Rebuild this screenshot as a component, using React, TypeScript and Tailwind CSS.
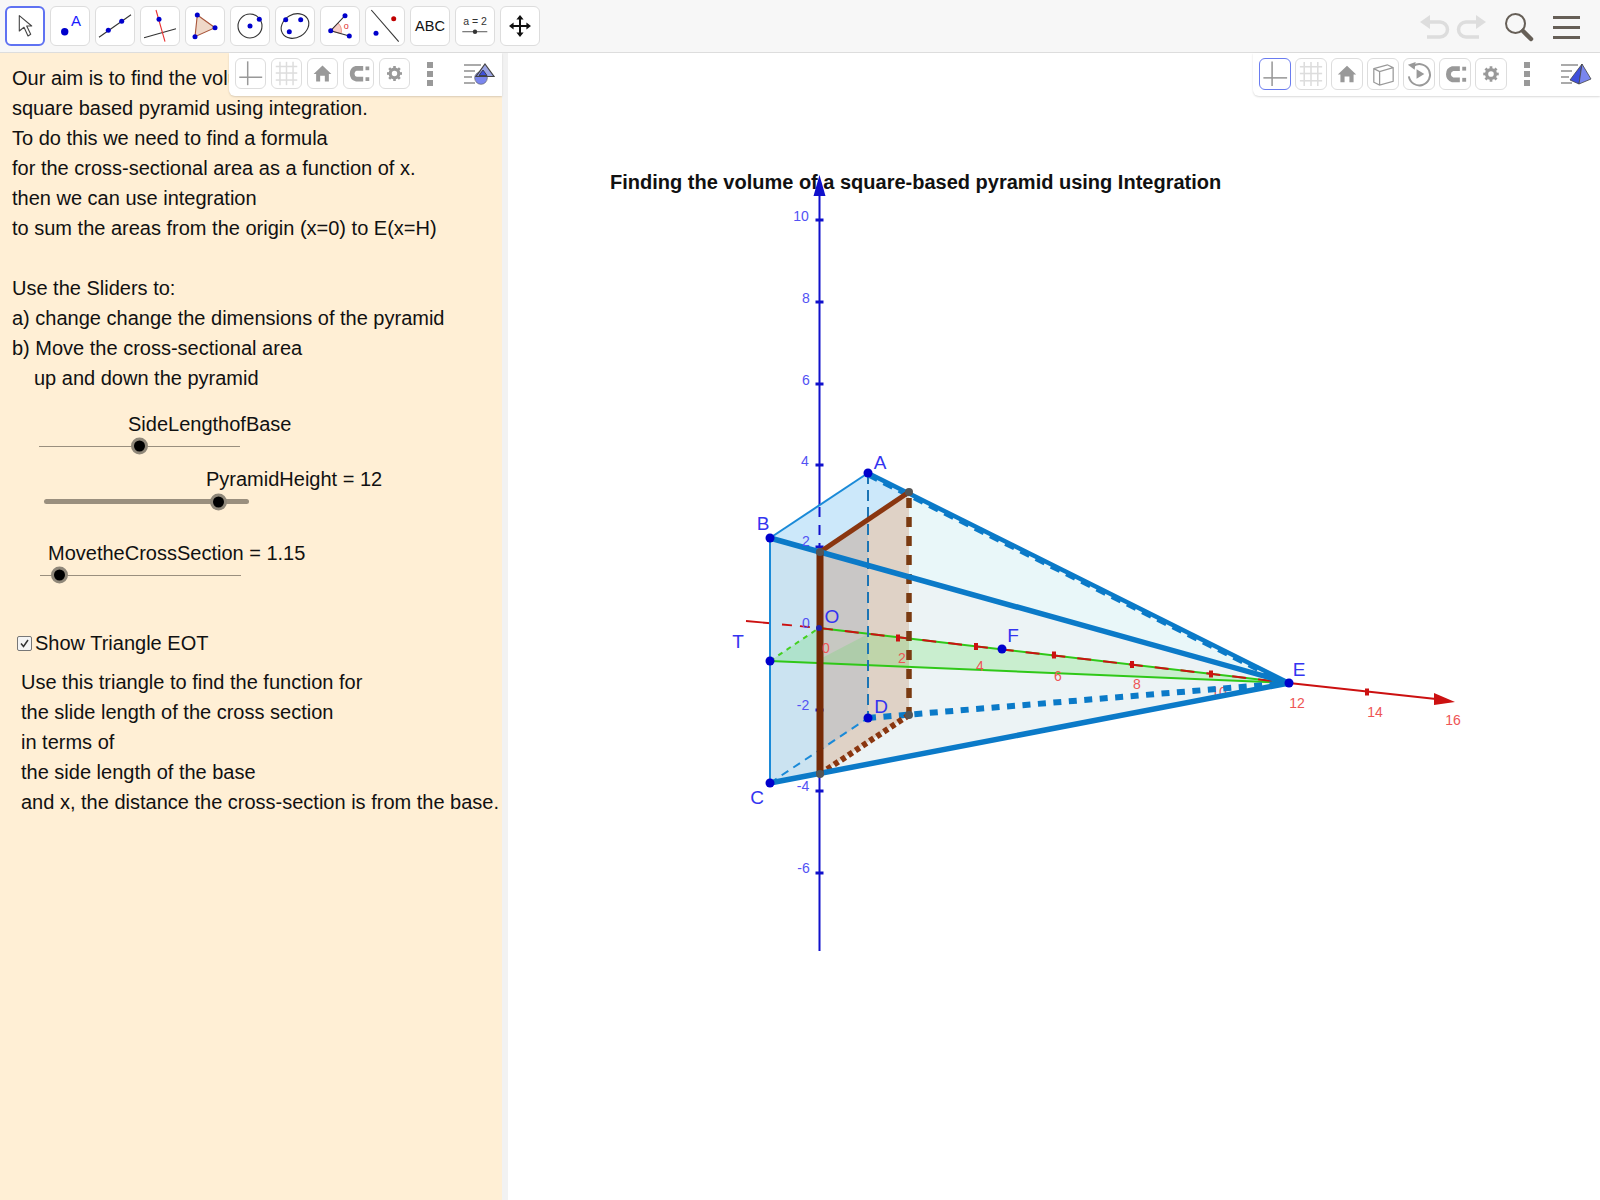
import React from "react";

const B = "#0000cc";
const Dot = ({ x, y, r = 2.5, c = B }: { x: number; y: number; r?: number; c?: string }) => <circle cx={x} cy={y} r={r} fill={c} />;

const tools: React.ReactNode[] = [
  <path d="M14.3 9.7 L14.3 25 L19 21.3 L23 30 L25.7 28.3 L21.7 20 L26.7 20 Z" fill="#fff" stroke="#444" strokeWidth="1.1" strokeLinejoin="round" />,
  <>
    <Dot x={14.7} y={25.7} r={3.7} />
    <text x={26} y={20} fontSize="15" fill="#1a1aff" textAnchor="middle" fontFamily="Liberation Sans">A</text>
  </>,
  <>
    <line x1={4} y1={31.3} x2={36} y2={8.7} stroke="#333" strokeWidth="1.1" />
    <Dot x={13.3} y={24.3} /><Dot x={26.7} y={15.3} />
  </>,
  <>
    <line x1={4} y1={31.7} x2={36} y2={22.7} stroke="#333" strokeWidth="1.1" />
    <line x1={16} y1={4} x2={25} y2={35.7} stroke="#e83030" strokeWidth="1.1" />
    <Dot x={19} y={13.3} />
  </>,
  <>
    <polygon points="12.3,9 30,21.7 10,30.7" fill="#efd8c8" stroke="#a8553a" strokeWidth="1.1" />
    <Dot x={12.3} y={9} /><Dot x={30} y={21.7} /><Dot x={10} y={30.7} />
  </>,
  <>
    <circle cx={20} cy={20} r={12} fill="none" stroke="#333" strokeWidth="1.1" />
    <Dot x={20} y={20} /><Dot x={29.3} y={13.3} />
  </>,
  <>
    <ellipse cx={20} cy={20} rx={14.5} ry={11.5} transform="rotate(-30 20 20)" fill="none" stroke="#333" strokeWidth="1.1" />
    <Dot x={10.7} y={13.7} /><Dot x={25.7} y={13.7} /><Dot x={14.3} y={25.7} />
  </>,
  <>
    <path d="M10.7 24.7 L18 17 A11 11 0 0 1 21 27.7 Z" fill="#f8cfc8" stroke="#e87060" strokeWidth="0.7" />
    <path d="M25 9.7 L10.7 24.7 L29.3 30" fill="none" stroke="#333" strokeWidth="1.1" />
    <Dot x={25} y={9.7} /><Dot x={10.7} y={24.7} /><Dot x={29.3} y={30} />
    <text x={26.3} y={23} fontSize="9" fill="#e03030" textAnchor="middle" fontFamily="Liberation Sans">o</text>
  </>,
  <>
    <line x1={6.3} y1={4} x2={33.7} y2={35.7} stroke="#333" strokeWidth="1.1" />
    <Dot x={28.7} y={12.7} c="#c00000" /><Dot x={11} y={27.3} />
  </>,
  <text x={20} y={25} fontSize="14.5" fill="#111" textAnchor="middle" fontFamily="Liberation Sans">ABC</text>,
  <>
    <text x={20} y={19} fontSize="10.5" fill="#333" textAnchor="middle" fontFamily="Liberation Sans">a = 2</text>
    <line x1={7.3} y1={25.7} x2={32.3} y2={25.7} stroke="#666" strokeWidth="1.1" />
    <circle cx={20} cy={25.7} r={2.2} fill="#333" />
  </>,
  <path d="M20 9 L23.6 13.6 L21 13.6 L21 19 L26.4 19 L26.4 16.4 L31 20 L26.4 23.6 L26.4 21 L21 21 L21 26.4 L23.6 26.4 L20 31 L16.4 26.4 L19 26.4 L19 21 L13.6 21 L13.6 23.6 L9 20 L13.6 16.4 L13.6 19 L19 19 L19 13.6 L16.4 13.6 Z" fill="#111" />,
];

const G = "#999999";
const StyleIcon = ({ kind }: { kind: string }) => {
  if (kind === "axes")
    return <><line x1={3.5} y1={19.5} x2={28} y2={19.5} stroke={G} strokeWidth="1.6" /><line x1={12.5} y1={2.5} x2={12.5} y2={28} stroke={G} strokeWidth="1.6" /></>;
  if (kind === "grid")
    return (
      <g stroke="#dddddd" strokeWidth="1.6">
        <line x1={4} y1={8} x2={27} y2={8} /><line x1={4} y1={15} x2={27} y2={15} /><line x1={4} y1={22.5} x2={27} y2={22.5} />
        <line x1={8.5} y1={3} x2={8.5} y2={28} /><line x1={15.5} y1={3} x2={15.5} y2={28} /><line x1={22.5} y1={3} x2={22.5} y2={28} />
      </g>
    );
  if (kind === "home") return <path d="M15.5 7 L25 16 L22.3 16 L22.3 24 L18 24 L18 18 L13 18 L13 24 L8.7 24 L8.7 16 L6 16 Z" fill={G} />;
  if (kind === "magnet")
    return (
      <g>
        <path d="M20.5 10 L13 10 A6 6 0 0 0 13 21.5 L20.5 21.5" fill="none" stroke={G} strokeWidth="5" />
        <rect x={23} y={8} width={4} height={4} fill={G} />
        <rect x={23} y={19.5} width={4} height={4} fill={G} />
      </g>
    );
  if (kind === "gear")
    return (
      <g>
        <circle cx={15.5} cy={15.5} r={4.6} fill="none" stroke={G} strokeWidth="3.4" />
        <g stroke={G} strokeWidth="2.8">
          <line x1={15.5} y1={7.5} x2={15.5} y2={10} /><line x1={15.5} y1={21} x2={15.5} y2={23.5} />
          <line x1={7.5} y1={15.5} x2={10} y2={15.5} /><line x1={21} y1={15.5} x2={23.5} y2={15.5} />
          <line x1={9.8} y1={9.8} x2={11.6} y2={11.6} /><line x1={19.4} y1={19.4} x2={21.2} y2={21.2} />
          <line x1={21.2} y1={9.8} x2={19.4} y2={11.6} /><line x1={11.6} y1={19.4} x2={9.8} y2={21.2} />
        </g>
      </g>
    );
  if (kind === "cube")
    return <path d="M6 10 L20 6 L26 9 L26 23 L12 27 L6 24 Z M6 10 L12 13 L26 9 M12 13 L12 27" fill="none" stroke={G} strokeWidth="1.3" />;
  return (
    <g>
      <path d="M10 7 A11 11 0 1 1 5 18" fill="none" stroke={G} strokeWidth="2" />
      <path d="M4 6 L12 3 L11 11 Z" fill={G} />
      <path d="M13 10.5 L21 15.5 L13 20.5 Z" fill={G} />
    </g>
  );
};

const SBtn = ({ kind, active, cls }: { kind: string; active?: boolean; cls: string }) => (
  <div className={`${cls} bg-white rounded-[6px] border ${active ? "border-[#6a7cf0]" : "border-[#dddddd]"}`}>
    <svg viewBox="0 0 31 31" className="w-full h-full block"><StyleIcon kind={kind} /></svg>
  </div>
);

const Dots = () => (
  <div className="flex flex-col items-center gap-[3px]">
    <div className="w-[6px] h-[6px] bg-[#999999]" />
    <div className="w-[6px] h-[6px] bg-[#999999]" />
    <div className="w-[6px] h-[6px] bg-[#999999]" />
  </div>
);

const Toggle = ({ pyramid }: { pyramid?: boolean }) => (
  <svg width="31" height="22" viewBox="0 0 31 22" className="block">
    <g stroke="#aaaaaa" strokeWidth="2">
      <line x1={0} y1={2} x2={17} y2={2} /><line x1={0} y1={8} x2={11} y2={8} />
      <line x1={0} y1={14} x2={8} y2={14} /><line x1={0} y1={20} x2={11} y2={20} />
    </g>
    {pyramid ? (
      <>
        <polygon points="21,1 9,17 18,21" fill="#3f50dc" stroke="#444" strokeWidth="0.8" />
        <polygon points="21,1 30,16 18,21" fill="#7a86ee" stroke="#444" strokeWidth="0.8" />
      </>
    ) : (
      <>
        <circle cx={17} cy={15} r={6.3} fill="#7a86ee" stroke="#666" strokeWidth="0.7" />
        <polygon points="21,1 30,13.5 12,13.5" fill="#8a94e0" fillOpacity="0.85" stroke="#444" strokeWidth="1.2" />
        <polygon points="19,7 23,12.5 15,12.5" fill="#3f50dc" stroke="#333" strokeWidth="0.8" />
      </>
    )}
  </svg>
);

const Knob = ({ cls }: { cls: string }) => (
  <div className={`${cls} absolute top-1/2 -translate-y-1/2 w-[17px] h-[17px] rounded-full bg-black border-[3px] border-[#8f8779]`} />
);

const topLines = [
  "square based pyramid using integration.",
  "To do this we need to find a formula",
  "for the cross-sectional area as a function of x.",
  "then we can use integration",
  "to sum the areas from the origin (x=0) to E(x=H)",
];
const midLines = [
  "Use the Sliders to:",
  "a) change change the dimensions of the pyramid",
  "b) Move the cross-sectional area",
];
const botLines = [
  "Use this triangle to find the function for",
  "the slide length of the cross section",
  "in terms of",
  "the side length of the base",
  "and x, the distance the cross-section is from the base.",
];

const Lab = ({ x, y, t, c, s = 14 }: { x: number; y: number; t: string; c: string; s?: number }) => (
  <text x={x} y={y} fontSize={s} fill={c} textAnchor="middle" dominantBaseline="central" fontFamily="Liberation Sans">{t}</text>
);

const zTicks = [220, 302, 384, 465, 547, 710, 791, 873];
const xTicks: [number, number][] = [[898, 638], [976, 646.5], [1054, 655], [1132, 664.5], [1211, 674], [1367, 692]];
const blue = "#0b7ac8";

const Scene = () => (
  <svg viewBox="508 53 1092 1147" className="w-full h-full block">
    <text x={610} y={181.5} fontSize="20" fontWeight="700" fill="#111111" dominantBaseline="central" fontFamily="Liberation Sans">Finding the volume of a square-based pyramid using Integration</text>

    {/* z axis behind */}
    <line x1={819.5} y1={190} x2={819.5} y2={951} stroke="#1010cc" strokeWidth="2" />
    <polygon points="819.5,175 813.5,196 825.5,196" fill="#1010cc" />

    {/* x axis */}
    <line x1={746} y1={621} x2={773} y2={623.5} stroke="#cc1111" strokeWidth="1.8" />
    <line x1={1289} y1={683} x2={1436} y2={699} stroke="#cc1111" strokeWidth="2" />
    <polygon points="1455,702 1434,693 1434,705" fill="#cc1111" />

    {/* faces */}
    <polygon points="868,473 1289,683 770,538" fill="#e9f7f9" />
    <polygon points="770,538 1289,683 770,783" fill="#ecf3f5" />
    <polygon points="770,538 868,473 909,492 820,552" fill="#cce8fa" />
    <polygon points="770,538 820,552 820,774 770,783" fill="#cbe3f1" />
    <polygon points="820,552 909,492 909,715 820,774" fill="#dfd2c6" />
    <polygon points="820,552 868,520 868,718 820,752" fill="#c9c7c6" />

    {/* z axis seen through the solid */}
    <line x1={819.5} y1={507} x2={819.5} y2={548} stroke="#1010cc" strokeWidth="2" strokeDasharray="10 8" />
    <Lab x={1219} y={692} t="10" c="#ee5555" />

    {/* green triangle */}
    <polygon points="770,661 819,628 1289,683" fill="#4fe04a" fillOpacity="0.22" />
    <polygon points="820,630 868,634 820,659" fill="#c7c8c2" />
    <line x1={770} y1={661} x2={1289} y2={683} stroke="#2fc818" strokeWidth="2" />
    <line x1={770} y1={661} x2={819} y2={628} stroke="#44d020" strokeWidth="2" strokeDasharray="5 5" />
    <line x1={819} y1={628} x2={1289} y2={683} stroke="#2fc818" strokeWidth="2" />
    <line x1={782} y1={624.5} x2={819} y2={628} stroke="#cc1111" strokeWidth="1.8" strokeDasharray="10 8" />
    <line x1={819} y1={628} x2={1289} y2={683} stroke="#cc1111" strokeWidth="2" strokeDasharray="14 12" />

    {xTicks.map(([x, y]) => <line key={x} x1={x} y1={y - 3.5} x2={x} y2={y + 3.5} stroke="#cc1111" strokeWidth="4" />)}
    {zTicks.map((y) => <line key={y} x1={815.5} y1={y} x2={823.5} y2={y} stroke="#1010cc" strokeWidth="3" />)}

    {/* hidden and thin edges */}
    <line x1={868} y1={473} x2={868} y2={718} stroke="#1b74b4" strokeWidth="2" strokeDasharray="11 6" />
    <line x1={770} y1={783} x2={868} y2={718} stroke="#1a8ad8" strokeWidth="2" strokeDasharray="8 6" />
    <line x1={770} y1={538} x2={770} y2={783} stroke="#1a8ad8" strokeWidth="2" />
    <line x1={770} y1={538} x2={868} y2={473} stroke="#1a8ad8" strokeWidth="2" />
    <line x1={868} y1={718} x2={1289} y2={683} stroke={blue} strokeWidth="6" strokeDasharray="8 7.5" />
    <line x1={868} y1={476} x2={1289} y2={686} stroke={blue} strokeWidth="3" strokeDasharray="10 7" />
    <line x1={868} y1={473} x2={1289} y2={683} stroke={blue} strokeWidth="4.5" />

    {/* cross-section */}
    <line x1={820} y1={552} x2={909} y2={492} stroke="#8a3610" strokeWidth="5" />
    <line x1={909} y1={498} x2={909} y2={715} stroke="#7a3a10" strokeWidth="5.5" strokeDasharray="10 9" />
    <line x1={820} y1={774} x2={909} y2={715} stroke="#8a3610" strokeWidth="6" strokeDasharray="5 3.5" />
    <line x1={770} y1={538} x2={1289} y2={683} stroke={blue} strokeWidth="5.5" />
    <line x1={770} y1={783} x2={1289} y2={683} stroke={blue} strokeWidth="5.5" />
    <line x1={820} y1={552} x2={820} y2={774} stroke="#762a06" strokeWidth="7" />

    <Dot x={820} y={552} r={4} c="#555555" />
    <Dot x={820} y={774} r={4} c="#555555" />
    <Dot x={909} y={492} r={4} c="#555555" />
    <Dot x={909} y={715} r={4} c="#555555" />
    {[[868, 473], [770, 538], [770, 783], [868, 718], [1289, 683], [770, 661], [1002, 649]].map(([x, y]) => (
      <Dot key={x + "-" + y} x={x} y={y} r={4.5} c="#0000cc" />
    ))}
    <Dot x={819} y={628} r={3} c="#2020aa" />

    <Lab x={801} y={216} t="10" c="#5252f4" />
    <Lab x={806} y={298} t="8" c="#5252f4" />
    <Lab x={806} y={380} t="6" c="#5252f4" />
    <Lab x={805} y={461} t="4" c="#5252f4" />
    <Lab x={806} y={541} t="2" c="#5252f4" />
    <Lab x={806} y={623} t="0" c="#5252f4" />
    <Lab x={803} y={705} t="-2" c="#5252f4" />
    <Lab x={803} y={786} t="-4" c="#5252f4" />
    <Lab x={803.5} y={868} t="-6" c="#5252f4" />

    <Lab x={826} y={648} t="0" c="#ee5555" />
    <Lab x={902} y={658} t="2" c="#ee5555" />
    <Lab x={980} y={666} t="4" c="#ee5555" />
    <Lab x={1058} y={676} t="6" c="#ee5555" />
    <Lab x={1137} y={684} t="8" c="#ee5555" />
    <Lab x={1297} y={703} t="12" c="#ee5555" />
    <Lab x={1375} y={712} t="14" c="#ee5555" />
    <Lab x={1453} y={720} t="16" c="#ee5555" />

    <Lab x={880} y={462} t="A" c="#3434f0" s={19} />
    <Lab x={763} y={523} t="B" c="#3434f0" s={19} />
    <Lab x={832} y={616} t="O" c="#3434f0" s={19} />
    <Lab x={738} y={641} t="T" c="#3434f0" s={19} />
    <Lab x={757} y={797} t="C" c="#3434f0" s={19} />
    <Lab x={881} y={706} t="D" c="#3434f0" s={19} />
    <Lab x={1013} y={635} t="F" c="#3434f0" s={19} />
    <Lab x={1299} y={669} t="E" c="#3434f0" s={19} />
  </svg>
);

export default function App() {
  return (
    <div className="w-[1600px] h-[1200px] flex flex-col bg-white overflow-hidden font-['Liberation_Sans',Arial,sans-serif] text-[#111111]">
      {/* toolbar */}
      <div className="h-[53px] shrink-0 bg-[#f7f7f7] border-b border-[#dddddd] flex items-start pt-[6px] pl-[5px] pr-[20px]">
        <div className="flex gap-[5px]">
          {tools.map((t, i) => (
            <div key={i} className={`w-[40px] h-[40px] bg-white rounded-[6px] ${i === 0 ? "border-2 border-[#5f72f2]" : "border border-[#dddddd]"}`}>
              <svg viewBox={i === 0 ? "2 2 36 36" : "1 1 38 38"} className="w-full h-full block">{t}</svg>
            </div>
          ))}
        </div>
        <div className="ml-auto flex items-center h-[42px]">
          <svg width="30" height="24" viewBox="0 0 30 24" fill="none" stroke="#dddddd" strokeWidth="3.5">
            <polygon points="0,7 10,0 10,14" fill="#dddddd" stroke="none" />
            <path d="M8 7 L20 7 A7.5 7.5 0 0 1 20 22 L7 22" />
          </svg>
          <svg width="30" height="24" viewBox="0 0 30 24" fill="none" stroke="#dddddd" strokeWidth="3.5" className="ml-[6px]">
            <polygon points="30,7 20,0 20,14" fill="#dddddd" stroke="none" />
            <path d="M22 7 L10 7 A7.5 7.5 0 0 0 10 22 L23 22" />
          </svg>
          <svg width="30" height="30" viewBox="0 0 30 30" fill="none" className="ml-[18px]">
            <circle cx={11.5} cy={11.5} r={9.5} stroke="#665f57" strokeWidth="2" />
            <line x1={19} y1={19} x2={27} y2={27} stroke="#665f57" strokeWidth="4.5" strokeLinecap="round" />
          </svg>
          <div className="ml-[19px] w-[27px] flex flex-col gap-[7px]">
            <div className="h-[3px] bg-[#665f57]" />
            <div className="h-[3px] bg-[#665f57]" />
            <div className="h-[3px] bg-[#665f57]" />
          </div>
        </div>
      </div>

      <div className="flex-1 flex min-h-0">
        {/* text panel */}
        <div className="relative w-[502px] shrink-0 bg-[#ffefd5] text-[20px] leading-[30px] pt-[10px]">
          <div className="pl-[12px]">
            <p>Our aim is to find the volume of a</p>
            {topLines.map((l) => <p key={l}>{l}</p>)}
            <p className="mt-[30px]">{midLines[0]}</p>
            {midLines.slice(1).map((l) => <p key={l}>{l}</p>)}
            <p className="pl-[22px]">up and down the pyramid</p>
          </div>

          <p className="mt-[16px] ml-[128px]">SideLengthofBase</p>
          <div className="relative h-[14px] ml-[39px] w-[201px]">
            <div className="absolute top-1/2 left-0 right-0 h-px bg-[#9a8f7e]" />
            <Knob cls="left-[92px]" />
          </div>

          <p className="mt-[11px] ml-[206px]">PyramidHeight = 12</p>
          <div className="relative h-[15px] ml-[44px] w-[205px]">
            <div className="absolute top-[5px] left-0 right-0 h-[5px] rounded-full bg-[#9a8f7e]" />
            <Knob cls="left-[166px]" />
          </div>

          <p className="mt-[29px] ml-[48px]">MovetheCrossSection = 1.15</p>
          <div className="relative h-[14px] ml-[40px] w-[201px]">
            <div className="absolute top-1/2 left-0 right-0 h-px bg-[#9a8f7e]" />
            <Knob cls="left-[11px]" />
          </div>

          <div className="mt-[46px] ml-[17px] flex items-center gap-[3px]">
            <div className="w-[15px] h-[15px] rounded-[2px] border border-[#777777] bg-[#f4f4f4] flex items-center justify-center">
              <svg width="11" height="11" viewBox="0 0 11 11" fill="none" stroke="#333333" strokeWidth="1.5"><path d="M2 5.5 L4.5 8.5 L9 2" /></svg>
            </div>
            <span>Show Triangle EOT</span>
          </div>
          <div className="mt-[9px] ml-[21px]">
            {botLines.map((l) => <p key={l} className="whitespace-nowrap">{l}</p>)}
          </div>

          {/* stylebar overlay */}
          <div className="absolute top-0 right-0 w-[273px] h-[43px] bg-white rounded-bl-[6px] shadow-[0_1px_2px_rgba(0,0,0,0.15)] flex items-center pl-[6px] pb-[2px] gap-[5px]">
            <SBtn kind="axes" cls="w-[31px] h-[31px]" />
            <SBtn kind="grid" cls="w-[31px] h-[31px]" />
            <SBtn kind="home" cls="w-[31px] h-[31px]" />
            <SBtn kind="magnet" cls="w-[31px] h-[31px]" />
            <SBtn kind="gear" cls="w-[31px] h-[31px]" />
            <div className="ml-[12px]"><Dots /></div>
            <div className="ml-[26px]"><Toggle /></div>
          </div>
        </div>

        <div className="w-[6px] shrink-0 bg-[#f2f2f2]" />

        {/* graphics view */}
        <div className="relative flex-1 min-w-0">
          <Scene />
          <div className="absolute top-0 right-0 w-[347px] h-[43px] bg-white rounded-bl-[6px] shadow-[0_1px_2px_rgba(0,0,0,0.15)] flex items-center pl-[6px] pb-[2px] gap-[4px]">
            <SBtn kind="axes" active cls="w-[32px] h-[32px]" />
            <SBtn kind="grid" cls="w-[32px] h-[32px]" />
            <SBtn kind="home" cls="w-[32px] h-[32px]" />
            <SBtn kind="cube" cls="w-[32px] h-[32px]" />
            <SBtn kind="rotate" cls="w-[32px] h-[32px]" />
            <SBtn kind="magnet" cls="w-[32px] h-[32px]" />
            <SBtn kind="gear" cls="w-[32px] h-[32px]" />
            <div className="ml-[13px]"><Dots /></div>
            <div className="ml-[27px]"><Toggle pyramid /></div>
          </div>
        </div>
      </div>
    </div>
  );
}
